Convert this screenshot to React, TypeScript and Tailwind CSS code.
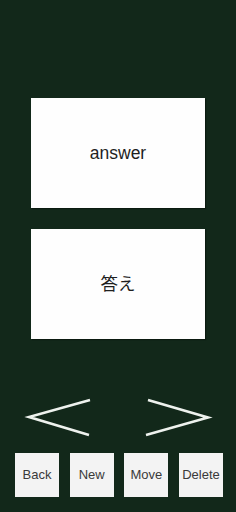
import React from "react";

const font = {
  fontFamily: '"Liberation Sans", Arial, "Noto Sans CJK JP", sans-serif',
};

function Card({ text }: { text: string }) {
  return (
    <div className="mx-auto flex h-[110px] w-[174px] items-center justify-center bg-[#fefefe] shadow-[1px_1px_1px_rgba(0,0,0,0.35)]">
      <span className="text-[17.5px] text-[#1f1f1f]">{text}</span>
    </div>
  );
}

function ActionButton({ label }: { label: string }) {
  return (
    <button className="flex h-[44px] w-[44px] items-center justify-center bg-[#f3f3f3] text-[13px] text-[#3a3a3a]">
      {label}
    </button>
  );
}

export default function App() {
  const buttons = ["Back", "New", "Move", "Delete"];

  return (
    <div
      className="flex h-[512px] w-[236px] flex-col overflow-hidden bg-[#12281a]"
      style={font}
    >
      <div className="flex flex-col gap-[21px] pt-[98px]">
        <Card text="answer" />
        <Card text="答え" />
      </div>

      <div className="mt-[58px] flex h-[40px] items-center gap-[52px] pl-[24px]">
        <button aria-label="Previous" className="h-[40px] w-[68px]">
          <svg width="68" height="40" viewBox="0 0 68 40">
            <polyline
              points="66,3 5,20 65,38"
              fill="none"
              stroke="#eef2ee"
              strokeWidth="2.6"
              strokeLinejoin="miter"
            />
          </svg>
        </button>
        <button aria-label="Next" className="h-[40px] w-[70px]">
          <svg width="70" height="40" viewBox="0 0 70 40">
            <polyline
              points="4,3 64,20.5 2,38"
              fill="none"
              stroke="#eef2ee"
              strokeWidth="2.6"
              strokeLinejoin="miter"
            />
          </svg>
        </button>
      </div>

      <div className="mt-[16px] flex justify-between pl-[15px] pr-[13px]">
        {buttons.map((b) => (
          <ActionButton key={b} label={b} />
        ))}
      </div>
    </div>
  );
}
